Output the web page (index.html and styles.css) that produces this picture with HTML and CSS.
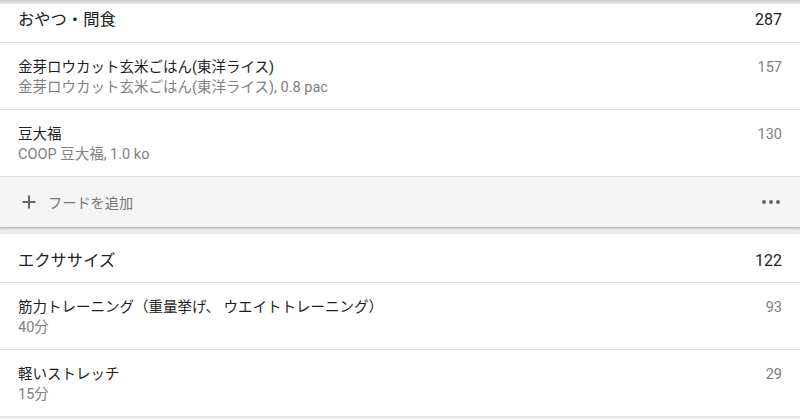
FILE: index.html
```html
<!DOCTYPE html>
<html lang="ja">
<head>
<meta charset="utf-8">
<link rel="stylesheet" href="styles.css">
</head>
<body>
<div class="page">
  <section class="card">
    <div class="head head-first">
      <span class="head-title">おやつ・間食</span>
      <span class="head-num">287</span>
    </div>
    <div class="row">
      <div class="row-text">
        <div class="row-title">金芽ロウカット玄米ごはん(東洋ライス)</div>
        <div class="row-sub">金芽ロウカット玄米ごはん(東洋ライス), 0.8 pac</div>
      </div>
      <div class="row-num">157</div>
    </div>
    <div class="row">
      <div class="row-text">
        <div class="row-title">豆大福</div>
        <div class="row-sub">COOP 豆大福, 1.0 ko</div>
      </div>
      <div class="row-num">130</div>
    </div>
    <div class="foot">
      <div class="add">
        <svg class="plus" width="14" height="14" viewBox="0 0 14 14"><path d="M7 0.5V13.5M0.5 7H13.5" stroke="#666" stroke-width="2" fill="none"/></svg>
        <span class="add-label">フードを追加</span>
      </div>
      <div class="more"><span class="dot"></span><span class="dot"></span><span class="dot"></span></div>
    </div>
  </section>
  <section class="card">
    <div class="head">
      <span class="head-title">エクササイズ</span>
      <span class="head-num">122</span>
    </div>
    <div class="row">
      <div class="row-text">
        <div class="row-title">筋力トレーニング（重量挙げ、 ウエイトトレーニング）</div>
        <div class="row-sub">40分</div>
      </div>
      <div class="row-num">93</div>
    </div>
    <div class="row">
      <div class="row-text">
        <div class="row-title">軽いストレッチ</div>
        <div class="row-sub">15分</div>
      </div>
      <div class="row-num">29</div>
    </div>
  </section>
</div>
</body>
</html>
```

FILE: styles.css
```css
html, body {
  margin: 0;
  padding: 0;
  background: #ebebeb;
  font-family: Roboto, "Noto Sans CJK JP", sans-serif;
  color: #212121;
}
.page {
  display: flex;
  flex-direction: column;
  gap: 7px;
  padding-top: 4px;
  box-shadow: inset 0 3px 3px -1px rgba(0,0,0,0.12);
}
.card {
  background: #fff;
  box-shadow: 0 1px 2px rgba(0,0,0,0.28);
}
.head {
  display: flex;
  justify-content: space-between;
  align-items: center;
  padding: 15px 18px 9px 18px;
  line-height: 24px;
  font-size: 16.3px;
  border-bottom: 1px solid #e2e2e2;
}
.head-first {
  padding-top: 4px;
  padding-bottom: 10px;
}
.head-num {
  font-size: 16px;
}
.row {
  display: flex;
  justify-content: space-between;
  align-items: flex-start;
  padding: 15px 18px 11px 18px;
  border-bottom: 1px solid #e2e2e2;
}
.row-title {
  font-size: 14.5px;
  line-height: 20px;
  color: #1e1e1e;
}
.row-sub {
  font-size: 14.5px;
  line-height: 20px;
  color: #808080;
}
.row-num {
  font-size: 14.5px;
  line-height: 20px;
  color: #808080;
}
.foot {
  height: 50px;
  background: #f4f4f4;
  display: flex;
  justify-content: space-between;
  align-items: center;
  padding: 0 20px 0 22px;
}
.add {
  display: flex;
  align-items: center;
  gap: 12px;
}
.plus {
  display: block;
}
.add-label {
  font-size: 14.2px;
  color: #777;
}
.more {
  display: flex;
  gap: 3px;
}
.dot {
  width: 4px;
  height: 4px;
  border-radius: 50%;
  background: #666;
}
```
